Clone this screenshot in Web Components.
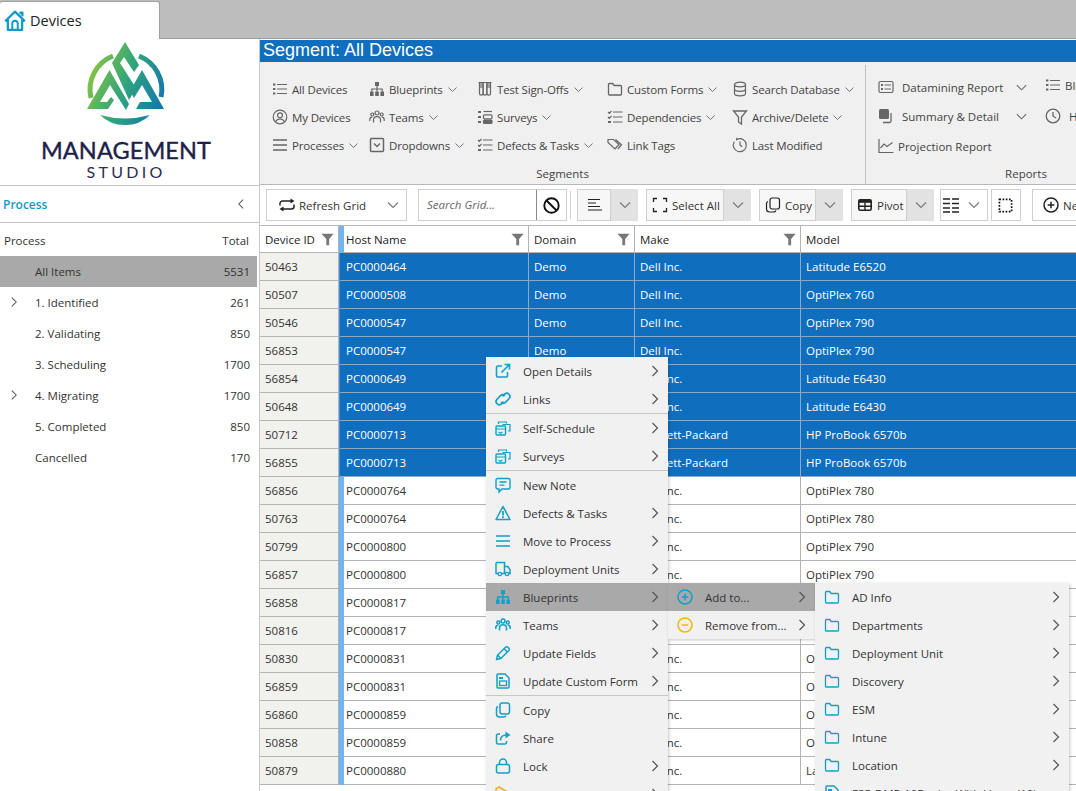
<!DOCTYPE html>
<html>
<head>
<meta charset="utf-8">
<title>Devices</title>
<style>
  html, body { margin: 0; height: 100%; overflow: hidden; background: #fff; }
  body { font: 11.5px "Open Sans", "Liberation Sans", sans-serif; color: #333; }
</style>
</head>
<body>
<ms-app>
  <ms-tabbar slot="tabs">Devices</ms-tabbar>
  <ms-sidebar slot="side">
    <ms-process-row total="5531" selected>All Items</ms-process-row>
    <ms-process-row total="261" expandable>1. Identified</ms-process-row>
    <ms-process-row total="850">2. Validating</ms-process-row>
    <ms-process-row total="1700">3. Scheduling</ms-process-row>
    <ms-process-row total="1700" expandable>4. Migrating</ms-process-row>
    <ms-process-row total="850">5. Completed</ms-process-row>
    <ms-process-row total="170">Cancelled</ms-process-row>
  </ms-sidebar>
  <ms-ribbon slot="main" title="Segment: All Devices"></ms-ribbon>
  <ms-toolbar slot="main"></ms-toolbar>
  <ms-grid slot="main"></ms-grid>

  <ms-menu slot="over" style="left:486px;top:357px;width:182px">
    <ms-menu-item icon="external" more>Open Details</ms-menu-item>
    <ms-menu-item icon="link" more>Links</ms-menu-item>
    <ms-menu-sep></ms-menu-sep>
    <ms-menu-item icon="schedule" more>Self-Schedule</ms-menu-item>
    <ms-menu-item icon="schedule" more>Surveys</ms-menu-item>
    <ms-menu-sep></ms-menu-sep>
    <ms-menu-item icon="note">New Note</ms-menu-item>
    <ms-menu-item icon="warning" more>Defects &amp; Tasks</ms-menu-item>
    <ms-menu-item icon="bars" more>Move to Process</ms-menu-item>
    <ms-menu-item icon="truck" more>Deployment Units</ms-menu-item>
    <ms-menu-item icon="hierarchy" more active>Blueprints</ms-menu-item>
    <ms-menu-item icon="teams" more>Teams</ms-menu-item>
    <ms-menu-item icon="pencil" more>Update Fields</ms-menu-item>
    <ms-menu-item icon="form" more>Update Custom Form</ms-menu-item>
    <ms-menu-sep></ms-menu-sep>
    <ms-menu-item icon="copy">Copy</ms-menu-item>
    <ms-menu-item icon="share">Share</ms-menu-item>
    <ms-menu-item icon="lock" more>Lock</ms-menu-item>
    <ms-menu-item icon="archive" tone="#f0a818" more>Archive</ms-menu-item>
  </ms-menu>
  <ms-menu slot="over" style="left:668px;top:583px;width:147px">
    <ms-menu-item icon="plus" more active>Add to...</ms-menu-item>
    <ms-menu-item icon="minus" tone="#f7b500" more>Remove from...</ms-menu-item>
  </ms-menu>
  <ms-menu slot="over" style="left:815px;top:583px;width:254px">
    <ms-menu-item icon="folder" more>AD Info</ms-menu-item>
    <ms-menu-item icon="folder" more>Departments</ms-menu-item>
    <ms-menu-item icon="folder" more>Deployment Unit</ms-menu-item>
    <ms-menu-item icon="folder" more>Discovery</ms-menu-item>
    <ms-menu-item icon="folder" more>ESM</ms-menu-item>
    <ms-menu-item icon="folder" more>Intune</ms-menu-item>
    <ms-menu-item icon="folder" more>Location</ms-menu-item>
    <ms-menu-item icon="form">F35-DMP-10Device With Users (10)</ms-menu-item>
  </ms-menu>
</ms-app>

<script>
// Icon paths, all drawn on a 16x16 box. Fills are marked with class f.
const ICONS = {
  list: '<path d="M5 3.500h10M5 8h10M5 12.500h10"/><path class="f" d="M1 2.500h2.400v2H1zM1 7h2.400v2H1zM1 11.500h2.400v2H1z"/>',
  bars: '<path stroke-width="1.600" d="M1 3h14M1 8h14M1 13h14"/>',
  hierarchy: '<path class="f" d="M6 1h4v4H6zM1 10.500h3.600V15H1zM6.200 10.500h3.600V15H6.200zM11.400 10.500H15V15h-3.600z"/><path d="M8 5v5.500M2.800 10.500V8h10.400v2.500"/>',
  tubes: '<path d="M1.500 1.500h13M2.500 1.500v11a1.700 1.700 0 0 0 3.400 0v-11M6.300 1.500v11a1.700 1.700 0 0 0 3.400 0v-11M10.100 1.500v11a1.700 1.700 0 0 0 3.400 0v-11"/><path class="f" d="M2.500 2h3.400v5H2.500zM10.100 2h3.400v5h-3.400z" opacity=".55"/>',
  folder: '<path stroke-width="1.300" d="M1.500 3.500c0-.6.4-1 1-1h3.200l1.500 2h6.300c.6 0 1 .4 1 1v7.500c0 .6-.4 1-1 1h-11c-.6 0-1-.4-1-1z"/>',
  db: '<ellipse cx="8" cy="3.500" rx="5.500" ry="2.300"/><path d="M2.500 3.500v9c0 1.300 2.500 2.300 5.500 2.300s5.500-1 5.500-2.300v-9M2.500 8c0 1.300 2.500 2.300 5.500 2.300s5.500-1 5.500-2.300"/>',
  user: '<circle cx="8" cy="8" r="6.800"/><circle cx="8" cy="6.300" r="2.500"/><path d="M3.500 13c.8-2 2.500-3 4.500-3s3.700 1 4.500 3"/>',
  teams: '<circle cx="8" cy="4" r="2"/><circle cx="3.300" cy="5.500" r="1.500"/><circle cx="12.700" cy="5.500" r="1.500"/><path d="M4.500 13.500V11c0-2 1.500-3.300 3.500-3.300s3.500 1.300 3.500 3.300v2.500M.8 12v-1.500c0-1.400 1-2.300 2.400-2.300M15.200 12v-1.500c0-1.400-1-2.300-2.400-2.300"/>',
  survey: '<path class="f" d="M1 2h3v2H1zM1 7h3v2H1zM1 12h3v2H1z"/><rect x="6.500" y="5.800" width="8.500" height="4" rx="1"/><rect x="6.500" y="11" width="8.500" height="3.500" rx="1" fill="currentColor"/><path d="M6.500 2.500h8.500"/>',
  dropdown: '<rect x="1.500" y="1.500" width="13" height="13" rx="1" stroke-width="1.500"/><path d="M5 6.500l3 3 3-3" stroke-width="1.300"/>',
  checks: '<path d="M6 3h9.500M6 8h9.500M6 13h9.500M1 3l1.300 1.300L4.500 2M1 8l1.300 1.300L4.500 7"/><path class="f" d="M1 12h3v2H1z"/>',
  tags: '<path d="M1 2.500h5.500l5.500 5-4 4.500-7-6.500zM8.500 2.500l6 5.200-3.700 4.300"/>',
  filter: '<path stroke-width="1.300" d="M1.500 2h13l-5 6v7l-3-2V8z"/>',
  modified: '<path stroke-width="1.200" d="M5.500 2.100a6.500 6.500 0 1 1-3.200 2.600M8 4.500V8l2.200 1.800"/><path class="f" d="M4 .5l2.500 1.800-2.300 1.500z"/>',
  report: '<rect x="1" y="2.500" width="14" height="11" rx="1.500"/><path d="M6.500 6h6.500M6.500 10h6.500"/><path class="f" d="M3 5h2v2H3zM3 9h2v2H3z"/>',
  summary: '<rect x="1" y="1" width="10" height="10" rx="1.500" fill="currentColor" stroke="none"/><path stroke-width="1.300" d="M13 5v8a1.500 1.500 0 0 1-1.500 1.500H5"/>',
  clock: '<circle cx="8" cy="8" r="6.800" stroke-width="1.300"/><path stroke-width="1.300" d="M8 4v4l3 2"/>',
  chart: '<path d="M1 1v13.500h14.500M2.500 10l3.500-4 3 2.500 5.500-4"/>',
  refresh: '<path stroke-width="1.500" d="M1 8.500V6.500A2.500 2.500 0 0 1 3.500 4h9M15 7.500v2a2.500 2.500 0 0 1-2.500 2.500h-9"/><path class="f" d="M11.500 1.500L15.500 4l-4 2.500zM4.500 9.500L.5 12l4 2.500z"/>',
  ban: '<circle cx="8" cy="8" r="6.800" stroke-width="1.800"/><path stroke-width="1.800" d="M3.300 3.300l9.400 9.400"/>',
  align: '<path d="M1 2.500h12M1 6h8M1 9.500h12M1 13h14"/>',
  corners: '<path stroke-width="1.300" d="M1.500 5V1.500H5M11 1.500h3.500V5M1.500 11v3.500H5M11 14.500h3.500V11"/>',
  copy: '<rect x="5" y="1" width="9.500" height="11" rx="2.200"/><path d="M3 4.500A2.300 2.300 0 0 0 1.500 6.700V12a3 3 0 0 0 3 3h4.300c1 0 1.800-.6 2.100-1.500"/>',
  pivot: '<rect x="1.800" y="2.800" width="12.400" height="10.400" rx="1.500" stroke-width="1.600"/><path class="f" d="M1.800 2.800h12.400v3H1.800z"/><path stroke-width="1.400" d="M1.800 9.300h12.400M8 5.500v7.700"/>',
  columns: '<path stroke-width="1.700" d="M0 2h7M9 2h7M0 6.500h7M9 6.500h7M0 11h7M9 11h7M0 15h7M9 15h7"/>',
  dotted: '<path stroke="#111" stroke-width="1.800" stroke-dasharray="1.800 1.600" d="M1.500 1.500h13v13h-13z"/>',
  plus: '<circle cx="8" cy="8" r="7" stroke-width="1.500"/><path stroke-width="1.500" d="M8 4.700v6.600M4.700 8h6.600"/>',
  minus: '<circle cx="8" cy="8" r="7" stroke-width="1.500"/><path stroke-width="1.500" d="M4.700 8h6.600"/>',
  external: '<path stroke-width="1.600" d="M7 3H3a1.500 1.500 0 0 0-1.500 1.500v8A1.500 1.500 0 0 0 3 14h8a1.500 1.500 0 0 0 1.500-1.500V9M6.500 9.500L14 2M9.500 1.500H14.500V6.500"/>',
  link: '<path stroke-width="1.700" d="M7.500 5.300L9.700 3a3.200 3.200 0 0 1 4.500 4.500l-3.500 3.700a3.200 3.200 0 0 1-4.500 0"/><path stroke-width="1.700" d="M8.500 10.700L6.300 13a3.200 3.200 0 0 1-4.500-4.500l3.500-3.700a3.200 3.200 0 0 1 4.500 0"/>',
  schedule: '<rect x="1" y="6" width="9.500" height="9" rx="1" stroke-width="1.400"/><path stroke-width="1.200" d="M3.500 4V2h8v1.500M13 11h2V4.500H7.500"/><path stroke-width="1.200" d="M1 9h9.500M3.500 12l2 1.300 2-1.300"/>',
  note: '<path stroke-width="1.400" d="M2.500 1.500h11A1.500 1.500 0 0 1 15 3v7.500a1.500 1.500 0 0 1-1.500 1.500H7l-3 3v-3H2.500A1.500 1.500 0 0 1 1 10.500V3a1.500 1.500 0 0 1 1.500-1.500z"/><path stroke-width="1.300" d="M4.500 5h7M4.500 8.200h5"/>',
  warning: '<path stroke-width="1.500" stroke-linejoin="round" d="M8 1.500l7 13H1z"/><path stroke-width="1.800" d="M8 6v4.500"/><path class="f" d="M7.100 11.300h1.800v1.600H7.100z"/>',
  truck: '<path stroke-width="1.500" d="M3 12.500H1V2.500A1 1 0 0 1 2 1.500h7.500v11H6.500M9.500 5.500h3.300l2.200 3v4h-1.500M9.500 12.500h1"/><circle cx="4.800" cy="13" r="1.700" stroke-width="1.300"/><circle cx="12" cy="13" r="1.700" stroke-width="1.300"/>',
  pencil: '<path stroke-width="1.500" stroke-linejoin="round" d="M1.500 14.500l1-4.300 8-8a1.700 1.700 0 0 1 2.500 0l.8.800a1.700 1.700 0 0 1 0 2.500l-8 8z"/><path stroke-width="1.300" d="M9 3.700l3.300 3.300M2.700 10.200l3.100 3.100"/>',
  form: '<path stroke-width="1.500" d="M2 2a1 1 0 0 1 1-1h7l4 4v9a1 1 0 0 1-1 1H3a1 1 0 0 1-1-1z"/><path class="f" d="M4 4h4v2H4z"/><rect x="4.500" y="8" width="7" height="4.500" stroke-width="1.300"/>',
  share: '<path stroke-width="1.500" d="M5 4H3a1.500 1.500 0 0 0-1.500 1.500v7A1.500 1.500 0 0 0 3 14h7a1.500 1.500 0 0 0 1.500-1.500V11"/><path stroke-width="1.700" d="M5.500 10.500c0-3.200 2.200-5.500 5.500-5.500h2"/><path class="f" d="M10.500 1.500L15.500 5l-5 3.500z"/>',
  lock: '<rect x="1.500" y="6.500" width="13" height="8.500" rx="2" stroke-width="1.500"/><path stroke-width="1.500" d="M4.500 6.500V4.500a3.500 3.500 0 0 1 7 0v2"/>',
  archive: '<path stroke-width="1.500" d="M1 3l3-2 10 6v7H2z"/>',
  home: '<path stroke-width="1.600" stroke-linejoin="round" d="M.8 8.200L8 1.200l7.200 7M2.800 6.500v8h10.400v-8M12 3V1.800h1.400v2.700"/><path stroke-width="1.400" d="M6 14.500V9.800a2 2 0 0 1 4 0v4.700"/>',
  chevdown: '<path stroke-width="1.100" d="M3 5.500l5 5 5-5"/>',
  chevright: '<path stroke-width="1.200" d="M5.500 3l5 5-5 5"/>',
  chevleft: '<path stroke-width="1.200" d="M10.500 3l-5 5 5 5"/>',
  funnel: '<path class="f" d="M.5 1h15L10 7.500V15H6.500V7.500z"/>'
};

class MsIcon extends HTMLElement {
  connectedCallback() {
    const size = this.getAttribute('size') || 16;
    this.attachShadow({ mode: 'open' }).innerHTML = `
      <style>
        :host { display: inline-flex; flex: none; width: ${size}px; height: ${size}px; }
        svg { width: 100%; height: 100%; fill: none; stroke: currentColor; stroke-width: var(--icon-stroke, 1); display: block; overflow: visible; }
        .f { fill: currentColor; stroke: none; }
      </style>
      <svg viewBox="0 0 16 16">${ICONS[this.getAttribute('name')] || ''}</svg>`;
  }
}

class MsApp extends HTMLElement {
  constructor() {
    super();
    this.attachShadow({ mode: 'open' }).innerHTML = `
      <style>
        :host { display: block; position: relative; width: 100%; height: 100vh; overflow: hidden; }
        .wrap { display: flex; flex-direction: column; height: 100%; }
        .body { display: flex; flex: 1; min-height: 0; }
        .main { flex: 1; min-width: 0; display: flex; flex-direction: column; overflow: hidden; }
      </style>
      <div class="wrap">
        <slot name="tabs"></slot>
        <div class="body">
          <slot name="side"></slot>
          <div class="main"><slot name="main"></slot></div>
        </div>
      </div>
      <slot name="over"></slot>`;
  }
}

class MsTabbar extends HTMLElement {
  constructor() {
    super();
    this.attachShadow({ mode: 'open' }).innerHTML = `
      <style>
        :host { display: flex; height: 39px; flex: none; background: #bdbdbd; border-bottom: 1px solid #9a9a9a; box-sizing: border-box; }
        .tab { width: 160px; height: 38px; margin-top: 1px; box-sizing: border-box; background: #fff;
          border: 1px solid #a0a0a0; border-width: 1px 1px 0 0; border-radius: 3px 3px 0 0;
          display: flex; align-items: center; padding: 0 0 0 4px; gap: 4px; font-size: 14.500px; color: #222; }
        ms-icon { color: #0f9bc6; }
      </style>
      <div class="tab"><ms-icon name="home" size="22"></ms-icon><slot></slot></div>`;
  }
}

class MsSidebar extends HTMLElement {
  constructor() {
    super();
    this.attachShadow({ mode: 'open' }).innerHTML = `
      <style>
        :host { display: flex; flex-direction: column; flex: none; width: 260px; box-sizing: border-box; border-right: 1px solid #c8c8c8; background: #fff; }
        .logo { height: 147px; flex: none; box-sizing: border-box; border-bottom: 1px solid #c4c4c4; padding: 1px 7px 0 0;
          display: flex; flex-direction: column; align-items: center; }
        svg { display: block; width: 84px; height: 90px; }
        .m { font: 400 23.500px/24px Lato, "Liberation Sans", sans-serif; color: #1d1f4a; letter-spacing: .1px; margin-top: 8px; -webkit-text-stroke: .4px #1d1f4a; white-space: nowrap; }
        .s { font: 400 16px/18px Lato, "Liberation Sans", sans-serif; color: #2b2d55; letter-spacing: 3.300px; margin-top: 1px; }
        .head { height: 37px; flex: none; box-sizing: border-box; border-bottom: 1px solid #c4c4c4; display: flex; align-items: center;
          justify-content: space-between; padding: 0 11px 0 3px; color: #0f9bc6; font-size: 12px; font-weight: 600; }
        .head ms-icon { color: #555; }
        .cols { height: 33px; flex: none; display: flex; align-items: center; justify-content: space-between; padding: 2px 10px 0 4px; color: #333; box-sizing: border-box; }
        .rows { padding-right: 2px; }
      </style>
      <div class="logo">
        <svg viewBox="84 40 84 90">
          <defs><linearGradient id="g" gradientUnits="userSpaceOnUse" x1="87" y1="70" x2="164" y2="100">
            <stop offset="0" stop-color="#8cc63f"/><stop offset=".5" stop-color="#2fa47c"/><stop offset="1" stop-color="#1477ad"/>
          </linearGradient></defs>
          <g fill="url(#g)">
            <path fill="none" stroke="url(#g)" stroke-width="5" d="M113 56A36 36 0 0 0 91 98M139 56A36 36 0 0 1 161 97"/>
            <path d="M100 115Q125 122 150 115Q140 125 125 125Q110 125 100 115Z"/>
            <path d="M87 109L109.500 70L129 104L126 110L110 85L100 102L107 102L111 97L114 100L108 109Z"/>
            <path d="M125 42L139 65L134 72L124 57L120 63L136 88L129 100L112 63Z"/>
            <path d="M142 70L164 109L136 109L140 102L152 102L142 85L134 98L130 91Z"/>
          </g>
        </svg>
        <div class="m">MANAGEMENT</div>
        <div class="s">STUDIO</div>
      </div>
      <div class="head"><span>Process</span><ms-icon name="chevleft" size="14"></ms-icon></div>
      <div class="cols"><span>Process</span><span>Total</span></div>
      <div class="rows"><slot></slot></div>`;
  }
}

class MsProcessRow extends HTMLElement {
  connectedCallback() {
    const open = this.hasAttribute('expandable') ? '<ms-icon name="chevright" size="14"></ms-icon>' : '';
    this.attachShadow({ mode: 'open' }).innerHTML = `
      <style>
        :host { display: flex; align-items: center; height: 31px; padding: 0 7px 0 35px; position: relative; color: #333; }
        :host([selected]) { background: #a9a9a9; }
        ms-icon { position: absolute; left: 7px; top: 8px; color: #555; }
        .t { flex: 1; }
      </style>
      ${open}<span class="t"><slot></slot></span><span>${this.getAttribute('total')}</span>`;
  }
}

class MsRibbonItem extends HTMLElement {
  connectedCallback() {
    const caret = this.hasAttribute('caret');
    this.attachShadow({ mode: 'open' }).innerHTML = `
      <style>
        :host { display: flex; align-items: center; height: 28px; gap: 4px; color: #444; white-space: nowrap; letter-spacing: -.15px; --icon-stroke: 1.200; }
        ms-icon { color: #666; }
        .c { margin-left: -1px; color: #666; }
      </style>
      <ms-icon name="${this.getAttribute('icon')}"></ms-icon><slot></slot>${caret ? '<ms-icon class="c" name="chevdown" size="13"></ms-icon>' : ''}`;
  }
}

class MsRibbon extends HTMLElement {
  connectedCallback() {
    const item = (icon, label, caret = true) => `<ms-ribbon-item icon="${icon}" ${caret ? 'caret' : ''}>${label}</ms-ribbon-item>`;
    this.attachShadow({ mode: 'open' }).innerHTML = `
      <style>
        :host { display: block; flex: none; }
        h1 { margin: 1px 0 0; height: 22px; background: #106ebe; color: #fff; font: 400 18px/21px "Liberation Sans", sans-serif; padding-left: 3px; }
        .bar { display: flex; height: 123px; background: #f0f0f0; border-bottom: 1px solid #b8b8b8; box-sizing: border-box; }
        .group { display: flex; flex-direction: column; flex: none; box-sizing: border-box; margin-top: 3px; }
        .seg { width: 606px; border-right: 1px solid #c0c0c0; }
        .rep { width: 320px; }
        .items { flex: 1; display: grid; grid-auto-flow: column; grid-template-rows: repeat(3, 28px); padding-top: 10px; padding-left: 12px; }
        .seg .items { grid-template-columns: 97px 108px 130px 125px 1fr; }
        .rep .items { grid-template-columns: 167px 1fr; }
        .label { text-align: center; height: 19px; line-height: 18px; color: #444; }
      </style>
      <h1>${this.getAttribute('title')}</h1>
      <div class="bar">
        <div class="group seg">
          <div class="items">
            ${item('list', 'All Devices', false)}${item('user', 'My Devices', false)}${item('bars', 'Processes')}
            ${item('hierarchy', 'Blueprints')}${item('teams', 'Teams')}${item('dropdown', 'Dropdowns')}
            ${item('tubes', 'Test Sign-Offs')}${item('survey', 'Surveys')}${item('checks', 'Defects &amp; Tasks')}
            ${item('folder', 'Custom Forms')}${item('checks', 'Dependencies')}${item('tags', 'Link Tags', false)}
            ${item('db', 'Search Database')}${item('filter', 'Archive/Delete')}${item('modified', 'Last Modified', false)}
          </div>
          <div class="label">Segments</div>
        </div>
        <div class="group rep">
          <div class="items">
            <ms-report-item icon="report" caret style="margin-top:-2px">Datamining Report</ms-report-item>
            <ms-report-item icon="summary" caret style="margin-top:-1px">Summary &amp; Detail</ms-report-item>
            <ms-report-item icon="chart" style="gap:4px;margin-top:1px">Projection Report</ms-report-item>
            <ms-report-item icon="list" style="gap:4px;margin-top:-4px">Blueprints</ms-report-item>
            <ms-report-item icon="clock" style="margin-top:-1px">History</ms-report-item>
          </div>
          <div class="label">Reports</div>
        </div>
      </div>`;
  }
}

class MsReportItem extends HTMLElement {
  connectedCallback() {
    this.attachShadow({ mode: 'open' }).innerHTML = `
      <style>
        :host { display: flex; align-items: center; height: 28px; gap: 8px; color: #444; white-space: nowrap; --icon-stroke: 1.200; }
        ms-icon { color: #666; }
        .t { flex: none; width: ${this.hasAttribute('caret') ? '112px' : 'auto'}; }
        .c { color: #666; margin-left: -8px; }
      </style>
      <ms-icon name="${this.getAttribute('icon')}"></ms-icon><span class="t"><slot></slot></span>${this.hasAttribute('caret') ? '<ms-icon class="c" name="chevdown" size="15"></ms-icon>' : ''}`;
  }
}

// Toolbar button: plain, or split when a caret section is asked for
class MsToolButton extends HTMLElement {
  connectedCallback() {
    const icon = this.getAttribute('icon');
    const split = this.hasAttribute('split');
    const width = this.getAttribute('width');
    const pad = this.getAttribute('pad') || 6;
    this.attachShadow({ mode: 'open' }).innerHTML = `
      <style>
        :host { display: flex; flex: none; height: 32px; box-sizing: border-box; color: #222; ${width ? `width: ${width}px;` : ''} }
        .b { flex: 1; min-width: 0; display: flex; align-items: center; gap: 4px; border: 1px solid #cfcfcf; background: ${split ? '#f7f7f7' : '#fff'}; padding: 0 5px 0 ${pad}px; box-sizing: border-box; white-space: nowrap; color: #333; overflow: hidden; }
        .s { width: 27px; flex: none; display: flex; align-items: center; justify-content: center; background: #e2e2e2; color: #777; }
        .i { color: #222; --icon-stroke: 1.200; }
        .c { color: #777; margin-left: auto; }
      </style>
      <div class="b">${icon ? `<ms-icon class="i" name="${icon}" size="${this.getAttribute('size') || 16}"></ms-icon>` : ''}<slot></slot>${this.hasAttribute('caret') ? '<ms-icon class="c" name="chevdown" size="16"></ms-icon>' : ''}</div>
      ${split ? '<div class="s"><ms-icon name="chevdown" size="16"></ms-icon></div>' : ''}`;
  }
}

class MsToolbar extends HTMLElement {
  constructor() {
    super();
    this.attachShadow({ mode: 'open' }).innerHTML = `
      <style>
        :host { display: flex; flex: none; align-items: flex-start; height: 41px; box-sizing: border-box; padding: 4px 0 0 6px; background: #fff; border-bottom: 1px solid #b8b8b8; overflow: hidden; }
        .search { display: flex; flex: none; height: 32px; width: 149px; margin-left: 11px; box-sizing: border-box; border: 1px solid #cfcfcf; }
        .search span { width: 118px; border-right: 1px solid #8a8a8a; padding-left: 8px; box-sizing: border-box; line-height: 30px; font-style: italic; color: #666; }
        .search div { flex: 1; display: flex; align-items: center; justify-content: center; color: #111; }
        .sep { width: 1px; height: 28px; margin: 2px 6px 0 3px; background: #cfcfcf; flex: none; }
        .ml8 { margin-left: 8px; }
        .ml3 { margin-left: 3px; }
        .ml6 { margin-left: 6px; }
        .ml11 { margin-left: 11px; }
      </style>
      <ms-tool-button icon="refresh" width="141" pad="12" caret>Refresh Grid</ms-tool-button>
      <div class="search"><span>Search Grid...</span><div><ms-icon name="ban" size="17"></ms-icon></div></div>
      <div class="sep"></div>
      <ms-tool-button icon="align" width="61" pad="9" split></ms-tool-button>
      <ms-tool-button class="ml8" icon="corners" width="105" pad="5" split>Select All</ms-tool-button>
      <ms-tool-button class="ml8" icon="copy" width="84" pad="5" split>Copy</ms-tool-button>
      <ms-tool-button class="ml8" icon="pivot" width="83" pad="5" split>Pivot</ms-tool-button>
      <ms-tool-button class="ml6" icon="columns" width="48" pad="2" caret></ms-tool-button>
      <ms-tool-button class="ml3" icon="dotted" width="30" pad="6" size="15"></ms-tool-button>
      <ms-tool-button class="ml11" icon="plus" width="110" pad="10">New</ms-tool-button>`;
  }
}

const ROWS = [
  ['50463', 'PC0000464', 'Dell Inc.', 'Latitude E6520', 1],
  ['50507', 'PC0000508', 'Dell Inc.', 'OptiPlex 760', 1],
  ['50546', 'PC0000547', 'Dell Inc.', 'OptiPlex 790', 1],
  ['56853', 'PC0000547', 'Dell Inc.', 'OptiPlex 790', 1],
  ['56854', 'PC0000649', 'Dell Inc.', 'Latitude E6430', 1],
  ['50648', 'PC0000649', 'Dell Inc.', 'Latitude E6430', 1],
  ['50712', 'PC0000713', 'Hewlett-Packard', 'HP ProBook 6570b', 1],
  ['56855', 'PC0000713', 'Hewlett-Packard', 'HP ProBook 6570b', 1],
  ['56856', 'PC0000764', 'Dell Inc.', 'OptiPlex 780'],
  ['50763', 'PC0000764', 'Dell Inc.', 'OptiPlex 780'],
  ['50799', 'PC0000800', 'Dell Inc.', 'OptiPlex 790'],
  ['56857', 'PC0000800', 'Dell Inc.', 'OptiPlex 790'],
  ['56858', 'PC0000817', 'Dell Inc.', 'OptiPlex 790'],
  ['50816', 'PC0000817', 'Dell Inc.', 'OptiPlex 790'],
  ['50830', 'PC0000831', 'Dell Inc.', 'OptiPlex 790'],
  ['56859', 'PC0000831', 'Dell Inc.', 'OptiPlex 790'],
  ['56860', 'PC0000859', 'Dell Inc.', 'OptiPlex 790'],
  ['50858', 'PC0000859', 'Dell Inc.', 'OptiPlex 790'],
  ['50879', 'PC0000880', 'Dell Inc.', 'Latitude E6430']
];

class MsGrid extends HTMLElement {
  connectedCallback() {
    const head = (label, filter = true, cls = '') =>
      `<div class="h ${cls}"><span>${label}</span>${filter ? '<ms-icon name="funnel" size="13"></ms-icon>' : ''}</div>`;
    const rows = ROWS.map(([id, host, make, model, sel]) => {
      const s = sel ? ' sel' : '';
      return `<div class="id c">${id}</div><div class="strip${s}"></div>
        <div class="c host${s}">${host}</div><div class="c${s}">Demo</div>
        <div class="c${s}">${make}</div><div class="c${s}">${model}</div>`;
    }).join('');
    this.attachShadow({ mode: 'open' }).innerHTML = `
      <style>
        :host { display: block; flex: 1; min-height: 0; overflow: hidden; background: #fff; }
        .g { display: grid; width: calc(100% + 2px); grid-template-columns: 79px 5px 185px 106px 166px 1fr; grid-template-rows: 27px; grid-auto-rows: 28px; }
        .h, .c { box-sizing: border-box; border-right: 1px solid #b4b4b4; border-bottom: 1px solid #b4b4b4; display: flex; align-items: center; padding: 0 5px; white-space: nowrap; overflow: hidden; }
        .h { justify-content: space-between; color: #222; padding-right: 4px; }
        .h ms-icon { color: #777; }
        .host { padding-left: 2px; }
        .id { background: #f1f1ed; }
        .strip { background: #74b4ee; }
        .strip.sel { background: #106ebe; box-shadow: inset 1px 0 #3f8fd6, inset 0 -1px #8fa9c4; }
        .c.sel { background: #106ebe; color: #fff; border-color: #8fa9c4; }
        .c { color: #333; }
      </style>
      <div class="g">
        ${head('Device ID')}<div class="strip"></div>${head('Host Name', true, 'host')}${head('Domain')}${head('Make')}${head('Model', false)}
        ${rows}
      </div>`;
  }
}

class MsMenu extends HTMLElement {
  constructor() {
    super();
    this.attachShadow({ mode: 'open' }).innerHTML = `
      <style>
        :host { display: block; position: absolute; background: #f1f1f1; box-shadow: 1px 1px 3px rgba(0,0,0,.22); z-index: 2; }
      </style>
      <slot></slot>`;
  }
}

class MsMenuItem extends HTMLElement {
  connectedCallback() {
    const tone = this.getAttribute('tone') || '#10a0c8';
    this.attachShadow({ mode: 'open' }).innerHTML = `
      <style>
        :host { display: flex; align-items: center; height: 28px; padding: 0 5px 0 9px; color: #333; white-space: nowrap; --icon-stroke: 1.500; }
        :host([active]) { background: #a9a9a9; }
        .i { color: ${tone}; margin-right: 12px; }
        .t { flex: 1; }
        .a { color: #555; --icon-stroke: 1; }
      </style>
      <ms-icon class="i" name="${this.getAttribute('icon')}"></ms-icon><span class="t"><slot></slot></span>${this.hasAttribute('more') ? '<ms-icon class="a" name="chevright" size="16"></ms-icon>' : ''}`;
  }
}

class MsMenuSep extends HTMLElement {
  constructor() {
    super();
    this.attachShadow({ mode: 'open' }).innerHTML = `<style>:host { display: block; height: 1px; background: #c6c6c6; }</style>`;
  }
}

customElements.define('ms-icon', MsIcon);
customElements.define('ms-app', MsApp);
customElements.define('ms-tabbar', MsTabbar);
customElements.define('ms-sidebar', MsSidebar);
customElements.define('ms-process-row', MsProcessRow);
customElements.define('ms-ribbon-item', MsRibbonItem);
customElements.define('ms-report-item', MsReportItem);
customElements.define('ms-ribbon', MsRibbon);
customElements.define('ms-tool-button', MsToolButton);
customElements.define('ms-toolbar', MsToolbar);
customElements.define('ms-grid', MsGrid);
customElements.define('ms-menu', MsMenu);
customElements.define('ms-menu-item', MsMenuItem);
customElements.define('ms-menu-sep', MsMenuSep);
</script>
</body>
</html>
